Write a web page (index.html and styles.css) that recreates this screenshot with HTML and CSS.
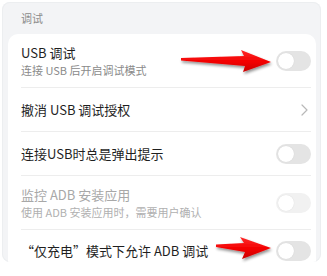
FILE: index.html
```html
<!DOCTYPE html>
<html lang="zh">
<head>
<meta charset="utf-8">
<link rel="stylesheet" href="styles.css">
</head>
<body>
<div class="panel">
  <div class="section-title">调试</div>
  <div class="card">
    <div class="row row-two">
      <div class="texts">
        <div class="title">USB 调试</div>
        <div class="sub">连接 USB 后开启调试模式</div>
      </div>
      <span class="toggle"><span class="knob"></span></span>
    </div>
    <div class="row row-one">
      <div class="title">撤消 USB 调试授权</div>
      <svg class="chevron" width="7" height="12" viewBox="0 0 7 12"><path d="M1 1 L6 6 L1 11" fill="none" stroke="#b8b8b8" stroke-width="1.2" stroke-linecap="round" stroke-linejoin="round"/></svg>
    </div>
    <div class="row row-one">
      <div class="title">连接USB时总是弹出提示</div>
      <span class="toggle"><span class="knob"></span></span>
    </div>
    <div class="row row-two row-disabled">
      <div class="texts">
        <div class="title">监控 ADB 安装应用</div>
        <div class="sub">使用 ADB 安装应用时，需要用户确认</div>
      </div>
      <span class="toggle toggle-disabled"><span class="knob"></span></span>
    </div>
    <div class="row row-last">
      <div class="title">“仅充电”模式下允许 ADB 调试</div>
      <span class="toggle"><span class="knob"></span></span>
    </div>
  </div>
</div>
<svg class="arrows" width="327" height="276" viewBox="0 0 327 276">
  <defs>
    <linearGradient id="red" x1="0" y1="0" x2="0" y2="1">
      <stop offset="0" stop-color="#ff2a2a"/>
      <stop offset="0.55" stop-color="#f20000"/>
      <stop offset="1" stop-color="#c80000"/>
    </linearGradient>
    <filter id="sh" x="-20%" y="-50%" width="140%" height="200%">
      <feGaussianBlur in="SourceAlpha" stdDeviation="1.6"/>
      <feOffset dx="1" dy="2" result="b"/>
      <feComponentTransfer><feFuncA type="linear" slope="0.45"/></feComponentTransfer>
      <feMerge><feMergeNode/><feMergeNode in="SourceGraphic"/></feMerge>
    </filter>
  </defs>
  <polygon filter="url(#sh)" fill="url(#red)" points="181,58 244,56 241,50 271,62 243,72 245,66 181,60.5"/>
  <polygon filter="url(#sh)" fill="url(#red)" points="216,244.5 244,243 240,237 271,248 242,259 245,252 216,247"/>
</svg>
</body>
</html>
```
FILE: styles.css
```css
html, body {
  margin: 0;
  padding: 0;
  background: #ffffff;
}
body {
  width: 327px;
  height: 276px;
  overflow: hidden;
  position: relative;
  font-family: "Noto Sans CJK SC", "Noto Sans", sans-serif;
}
.panel {
  margin: 2px 6px 0 2px;
  height: 260px;
  background: #f3f4f6;
  border-radius: 8px;
  padding: 0 5px 0 6px;
  overflow: hidden;
  box-shadow: inset 0 0 0 1px #eceef0;
}
.section-title {
  height: 32px;
  line-height: 32px;
  font-size: 11px;
  color: #8c8c8c;
  padding-left: 13px;
}
.card {
  background: #ffffff;
  border-radius: 10px 10px 0 0;
  padding: 0 5px 0 13px;
  height: 240px;
}
.row {
  display: flex;
  align-items: center;
  justify-content: space-between;
  border-bottom: 1px solid #ededed;
  box-sizing: border-box;
}
.row-two { height: 54px; }
.row-one { height: 44px; }
.row-last { height: 42px; border-bottom: none; }
.texts {
  display: flex;
  flex-direction: column;
  gap: 1px;
}
.title {
  font-size: 13px;
  line-height: 18px;
  color: #1f1f1f;
}
.sub {
  font-size: 11px;
  line-height: 15px;
  color: #8a8a8a;
}
.row-disabled .title { color: #a8a8a8; }
.row-disabled .sub { color: #b0b0b0; }
.toggle {
  width: 35px;
  height: 20px;
  border-radius: 10px;
  background: #e4e4e4;
  display: flex;
  align-items: center;
  padding-left: 2px;
  box-sizing: border-box;
  flex: none;
}
.knob {
  width: 16px;
  height: 16px;
  border-radius: 50%;
  background: #ffffff;
  box-shadow: 0 0 1px rgba(0,0,0,0.15);
}
.toggle-disabled { background: #f1f1f1; }
.chevron { margin-right: 3px; }
.arrows {
  position: absolute;
  left: 0;
  top: 0;
  pointer-events: none;
}
```
